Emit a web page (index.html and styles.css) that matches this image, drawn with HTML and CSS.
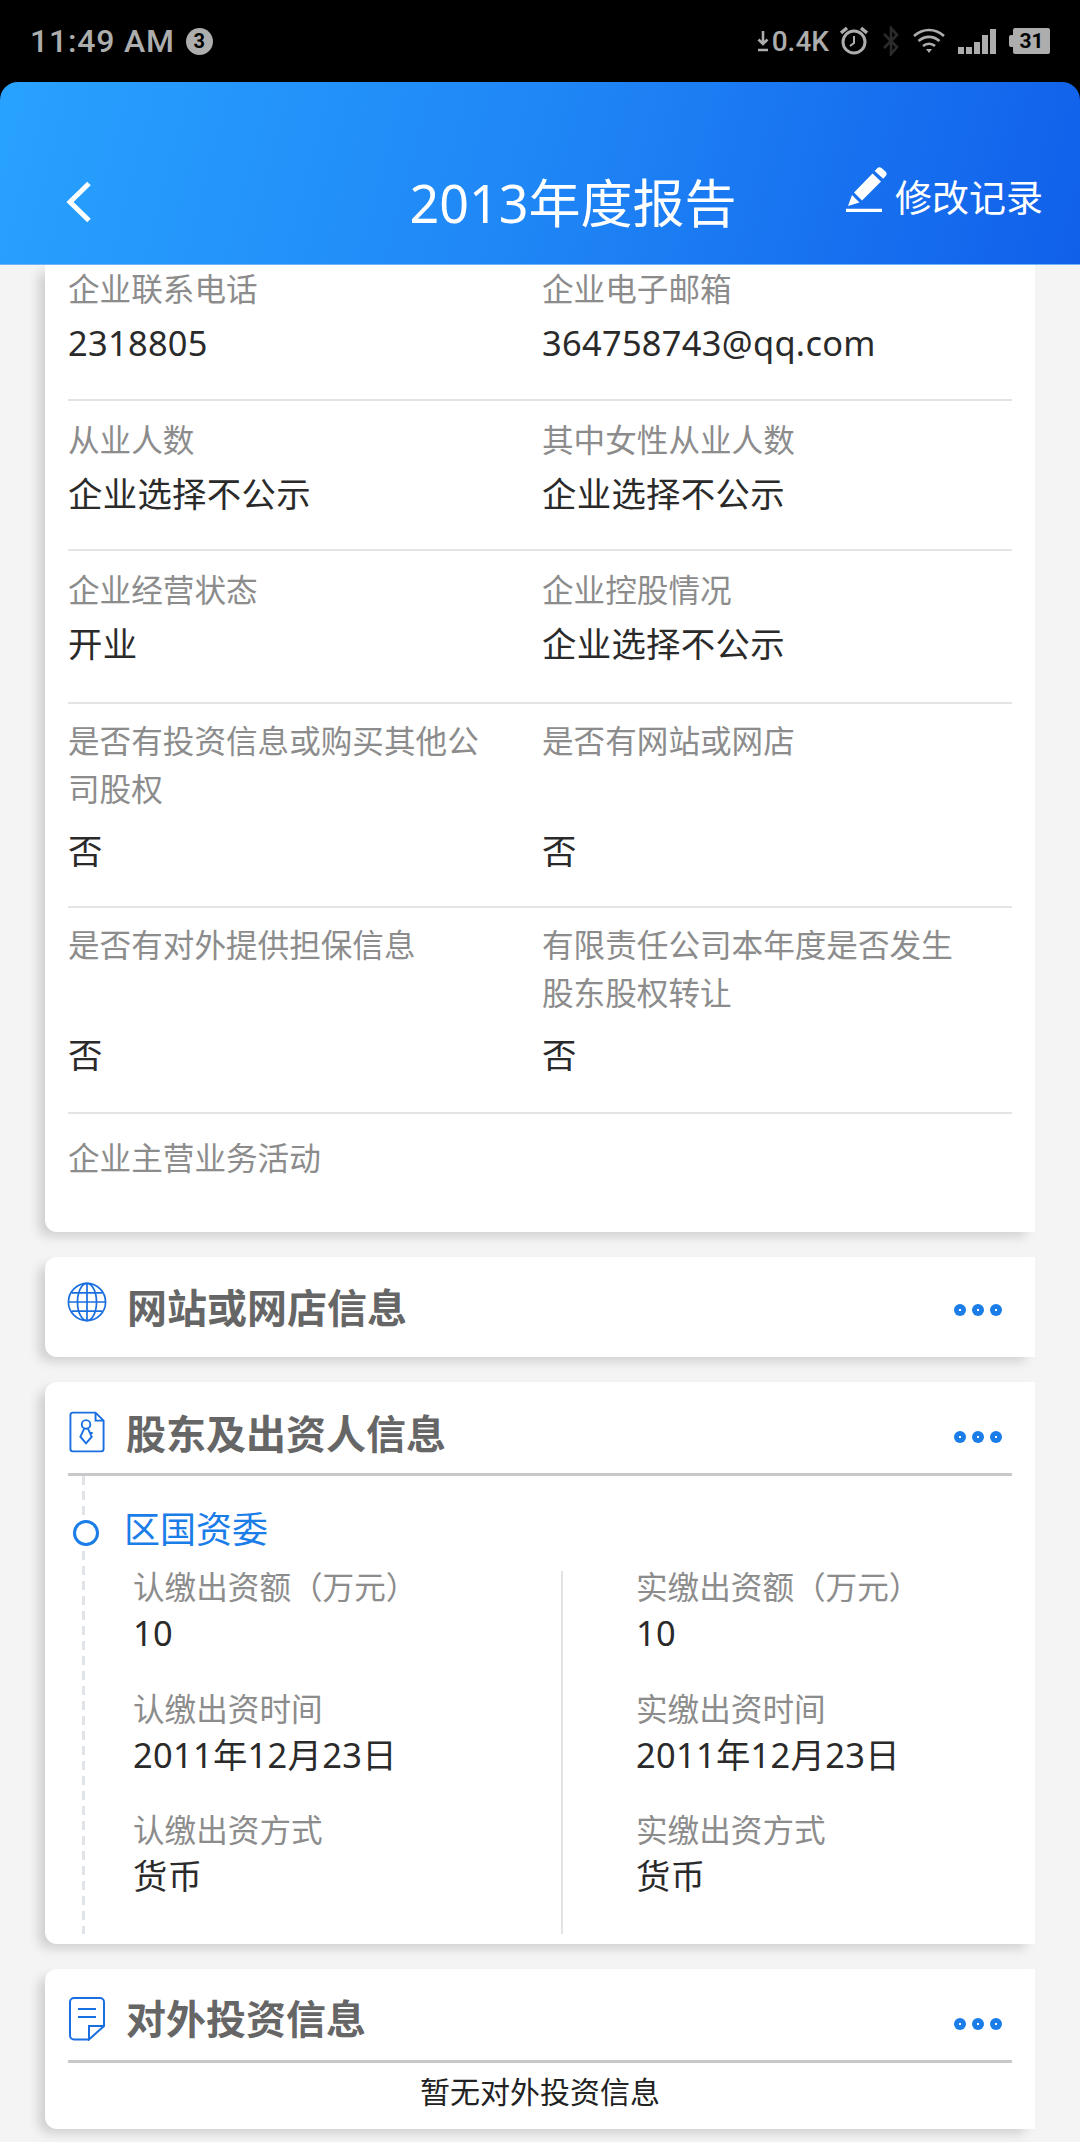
FILE: index.html
```html
<!DOCTYPE html>
<html lang="zh-CN">
<head>
  <meta charset="UTF-8">
  <title>2013年度报告</title>
  <link rel="stylesheet" href="styles.css">
</head>
<body>
  <div class="status-bar">
    <div class="status-left">
      <span class="clock">11:49 AM</span>
      <span class="badge">3</span>
    </div>
    <div class="status-right">
      <svg class="ic-down" width="12" height="26" viewBox="0 0 12 26"><path d="M6 3v13M1.500 11.500 6 16l4.500-4.500M1 22h10" fill="none" stroke="#adadad" stroke-width="2.600"/></svg>
      <span class="speed">0.4K</span>
      <svg class="ic-alarm" width="28" height="30" viewBox="0 0 28 30"><circle cx="14" cy="16" r="11" fill="none" stroke="#adadad" stroke-width="3"/><path d="M14 10v7l-4 3" fill="none" stroke="#adadad" stroke-width="2"/><path d="M1 7 7 2M27 7l-6-5" stroke="#adadad" stroke-width="3.500" fill="none"/></svg>
      <svg class="ic-bt" width="20" height="30" viewBox="0 0 20 30"><path d="M3 8l13 13-6 7V2l6 7L3 22" fill="none" stroke="#2b2b2b" stroke-width="2.600"/></svg>
      <svg class="ic-wifi" width="32" height="26" viewBox="0 0 32 26"><path d="M1 8c9-8 21-8 30 0M5.500 13c6.500-5.500 14.500-5.500 21 0M10 18c3.500-3 8.500-3 12 0" fill="none" stroke="#adadad" stroke-width="2.600"/><path d="M13 21h6l-3 4z" fill="#adadad"/></svg>
      <div class="signal"><i class="s1"></i><i class="s2"></i><i class="s3"></i><i class="s4"></i><i class="s5"></i></div>
      <div class="battery"><span>31</span></div>
    </div>
  </div>

  <header class="app-bar">
    <svg class="back" width="26" height="42" viewBox="0 0 26 42"><path d="M23 2.500 4 21l19 18.500" fill="none" stroke="#fff" stroke-width="5"/></svg>
    <h1 class="title">2013年度报告</h1>
    <div class="edit-log">
      <svg width="44" height="46" viewBox="0 0 44 46"><path d="M32 2.500c1.500-1.500 3-1.500 4.500-.5l4 3.500c1.500 1.500 1.500 3 .2 4.500l-2.500 2.800-8.500-7.800zM27.500 7.500l8.500 8-19 19-8-8zM7 29l7.500 7.500L3 40z" fill="#fff"/><path d="M1 44.500h36" stroke="#fff" stroke-width="3.400"/></svg>
      <span>修改记录</span>
    </div>
  </header>

  <main class="content">
    <section class="card card-info">
      <div class="row row-first">
        <div class="cell"><div class="label">企业联系电话</div><div class="value">2318805</div></div>
        <div class="cell"><div class="label">企业电子邮箱</div><div class="value">364758743@qq.com</div></div>
      </div>
      <div class="row">
        <div class="cell"><div class="label">从业人数</div><div class="value">企业选择不公示</div></div>
        <div class="cell"><div class="label">其中女性从业人数</div><div class="value">企业选择不公示</div></div>
      </div>
      <div class="row">
        <div class="cell"><div class="label">企业经营状态</div><div class="value">开业</div></div>
        <div class="cell"><div class="label">企业控股情况</div><div class="value">企业选择不公示</div></div>
      </div>
      <div class="row row-tall">
        <div class="cell"><div class="label">是否有投资信息或购买其他公司股权</div><div class="value">否</div></div>
        <div class="cell"><div class="label">是否有网站或网店</div><div class="value">否</div></div>
      </div>
      <div class="row row-tall">
        <div class="cell"><div class="label">是否有对外提供担保信息</div><div class="value">否</div></div>
        <div class="cell"><div class="label">有限责任公司本年度是否发生股东股权转让</div><div class="value">否</div></div>
      </div>
      <div class="row row-last">
        <div class="cell"><div class="label">企业主营业务活动</div></div>
      </div>
    </section>

    <section class="card card-collapsed">
      <div class="card-head">
        <svg class="head-icon" width="40" height="40" viewBox="0 0 42 42" fill="none" stroke="#1a6fe0" stroke-width="1.800"><circle cx="21" cy="21" r="19.500"/><ellipse cx="21" cy="21" rx="10" ry="19.500"/><path d="M21 2v38M2 21h38M5 11.500h32M5 30.500h32"/></svg>
        <h2>网站或网店信息</h2>
        <div class="more"><i></i><i></i><i></i></div>
      </div>
    </section>

    <section class="card card-holder">
      <div class="card-head head-line">
        <svg class="head-icon icon-doc" width="36" height="42" viewBox="0 0 38 44" fill="none" stroke="#1a6fe0" stroke-width="2"><path d="M4 1.500h24l8.500 8.500v30a2.500 2.500 0 0 1-2.500 2.500H4A2.500 2.500 0 0 1 1.500 40V4A2.500 2.500 0 0 1 4 1.500zM28 1.500V10h8.500"/><circle cx="18" cy="14" r="4.500"/><path d="M16 18.500 12 27l6 7 6-7-4-8.500M22 23h3"/></svg>
        <h2>股东及出资人信息</h2>
        <div class="more"><i></i><i></i><i></i></div>
      </div>
      <div class="timeline">
        <div class="holder-name">区国资委</div>
        <div class="pay">
          <div class="pay-col">
            <div class="label">认缴出资额（万元）</div><div class="value">10</div>
            <div class="label">认缴出资时间</div><div class="value">2011年12月23日</div>
            <div class="label">认缴出资方式</div><div class="value">货币</div>
          </div>
          <div class="pay-col pay-right">
            <div class="label">实缴出资额（万元）</div><div class="value">10</div>
            <div class="label">实缴出资时间</div><div class="value">2011年12月23日</div>
            <div class="label">实缴出资方式</div><div class="value">货币</div>
          </div>
        </div>
      </div>
    </section>

    <section class="card card-invest">
      <div class="card-head head-line">
        <svg class="head-icon icon-doc" width="36" height="44" viewBox="0 0 36 44" fill="none" stroke="#1a6fe0" stroke-width="2"><path d="M20 42.500H5a4 4 0 0 1-4-4V5a4 4 0 0 1 4-4h26a4 4 0 0 1 4 4v24L20 42.500V29h15M9 12h18M9 20h18"/></svg>
        <h2>对外投资信息</h2>
        <div class="more"><i></i><i></i><i></i></div>
      </div>
      <div class="empty">暂无对外投资信息</div>
    </section>
  </main>
</body>
</html>
```

FILE: styles.css
```css
* {
  box-sizing: border-box;
}

html, body {
  margin: 0;
  padding: 0;
}

body {
  width: 1080px;
  height: 2142px;
  overflow: hidden;
  background: #000;
  font-family: "Noto Sans", "Noto Sans CJK SC", sans-serif;
}

.status-bar {
  height: 82px;
  padding: 0 30px;
  display: flex;
  justify-content: space-between;
  align-items: center;
  color: #adadad;
  font-family: Roboto, sans-serif;
}

.status-left, .status-right {
  display: flex;
  align-items: center;
}

.clock {
  font-size: 32px;
  font-weight: 500;
  letter-spacing: 0.8px;
}

.badge {
  width: 27px;
  height: 27px;
  margin-left: 11px;
  border-radius: 50%;
  background: #adadad;
  color: #000;
  font-size: 20px;
  font-weight: 700;
  line-height: 27px;
  text-align: center;
}

.speed {
  margin-left: 3px;
  font-size: 28px;
  font-weight: 500;
}

.ic-alarm {
  margin-left: 11px;
}

.ic-bt {
  margin-left: 13px;
}

.ic-wifi {
  margin-left: 12px;
}

.signal {
  margin-left: 13px;
  height: 26px;
  display: flex;
  align-items: flex-end;
  gap: 2px;
}

.signal i {
  width: 6px;
  background: #adadad;
}

.s1 { height: 7px; }
.s2 { height: 7px; }
.s3 { height: 12px; }
.s4 { height: 19px; }
.s5 { height: 25px; }

.battery {
  margin-left: 17px;
  width: 37px;
  height: 26px;
  border-radius: 2px;
  background: #adadad;
  color: #000;
  font-size: 21px;
  font-weight: 700;
  line-height: 26px;
  text-align: center;
  position: relative;
}

.battery::before {
  content: "";
  position: absolute;
  left: -4px;
  top: 7px;
  width: 4px;
  height: 12px;
  border-radius: 2px 0 0 2px;
  background: #adadad;
}

.app-bar {
  height: 183px;
  padding: 0 37px 0 66px;
  position: relative;
  display: flex;
  align-items: center;
  justify-content: space-between;
  border-radius: 18px 18px 0 0;
  background: linear-gradient(105deg, #28a2ff 0%, #1f86f6 50%, #1160ea 100%);
  border-bottom: 1px solid #6db4fb;
  color: #fff;
}

.back {
  margin-top: 58px;
}

.title {
  position: absolute;
  left: 66px;
  right: 0;
  top: 91px;
  margin: 0;
  font-size: 52px;
  font-weight: 400;
  line-height: 60px;
  text-align: center;
}

.edit-log {
  margin-top: 50px;
  display: flex;
  align-items: center;
  gap: 6px;
  font-size: 37px;
  line-height: 48px;
}

.edit-log svg {
  margin-bottom: 19px;
}

.content {
  height: 1877px;
  padding: 0 45px;
  background: #f4f4f4;
}

.card {
  padding: 0 23px;
  border-radius: 12px 0 0 12px;
  background: #fff;
  box-shadow: -8px 6px 12px -2px rgba(0, 0, 0, 0.16);
}

.card-info {
  height: 967px;
  border-radius: 0 0 0 12px;
}

.row {
  display: grid;
  grid-template-columns: 474px 1fr;
  border-bottom: 2px solid #e4e4e4;
  padding-top: 15px;
}

.row:nth-child(2) { height: 150px; }
.row:nth-child(3) { height: 153px; }
.row:nth-child(4) { height: 204px; padding-top: 13px; }
.row:nth-child(5) { height: 206px; padding-top: 13px; }

.row-first {
  height: 136px;
  padding-top: 0;
}

.row-last {
  border-bottom: none;
  padding-top: 20px;
}

.row-tall .label {
  min-height: 96px;
}

.row-tall .value {
  margin-top: 13px;
}

.cell {
  padding-right: 40px;
}

.label {
  color: #8c8c8c;
  font-size: 31.6px;
  line-height: 48px;
}

.value {
  color: #2a2a2a;
  font-size: 34.4px;
  letter-spacing: 0.3px;
  line-height: 50px;
  margin-top: 5px;
}

.card-collapsed {
  height: 100px;
  margin-top: 25px;
}

.card-holder {
  height: 562px;
  margin-top: 25px;
}

.card-invest {
  height: 160px;
  margin-top: 25px;
}

.card-head {
  height: 100px;
  display: flex;
  align-items: center;
}

.head-line {
  height: 94px;
  padding-top: 8px;
  border-bottom: 3px solid #c8c8c8;
}

.head-icon {
  flex: none;
  margin-left: -1px;
  margin-right: 20px;
  margin-bottom: 10px;
}

.icon-doc {
  margin-left: 1px;
  margin-right: 21px;
  margin-bottom: 0;
}

.card-head h2 {
  flex: 1;
  margin: -3px 0 0;
  color: #666;
  font-size: 40px;
  font-weight: 700;
  font-family: "Noto Sans CJK SC", sans-serif;
}

.head-line h2 {
  margin-top: 0;
}

.card-invest .head-line h2 {
  margin-top: -4px;
}

.more {
  margin-top: 6px;
  margin-right: 10px;
  display: flex;
  gap: 6px;
}

.head-line .more {
  margin-top: 11px;
}

.more i {
  width: 12px;
  height: 12px;
  border-radius: 50%;
  background: #1a7de8;
  position: relative;
}

.more i::after {
  content: "";
  position: absolute;
  left: 5px;
  top: 5px;
  width: 2px;
  height: 2px;
  background: #fff;
}

.timeline {
  position: relative;
  height: 458px;
  padding-left: 58px;
}

.timeline::before {
  content: "";
  position: absolute;
  left: 14px;
  top: 0;
  bottom: 0;
  width: 3px;
  background: repeating-linear-gradient(to bottom, #e0e3e8 0 9px, transparent 9px 15px);
}

.timeline::after {
  content: "";
  position: absolute;
  left: 5px;
  top: 44px;
  width: 20px;
  height: 20px;
  border: 3px solid #1a7de8;
  border-radius: 50%;
  background: #fff;
}

.holder-name {
  padding-top: 30px;
  margin-left: -2px;
  color: #1a7de8;
  font-size: 36px;
  line-height: 48px;
}

.pay {
  display: grid;
  grid-template-columns: 435px 1fr;
  margin-top: 17px;
}

.pay-col {
  padding-left: 7px;
  height: 363px;
}

.pay-col .label {
  line-height: 46px;
}

.pay-col .label:first-child {
  margin-top: -7px;
}

.pay-col .value {
  line-height: 46px;
  margin-top: 0;
  margin-bottom: 29.5px;
}

.pay-right {
  padding-left: 73px;
  border-left: 2px solid #e4e4e4;
}

.empty {
  color: #222;
  font-size: 30px;
  line-height: 58px;
  text-align: center;
}
```
